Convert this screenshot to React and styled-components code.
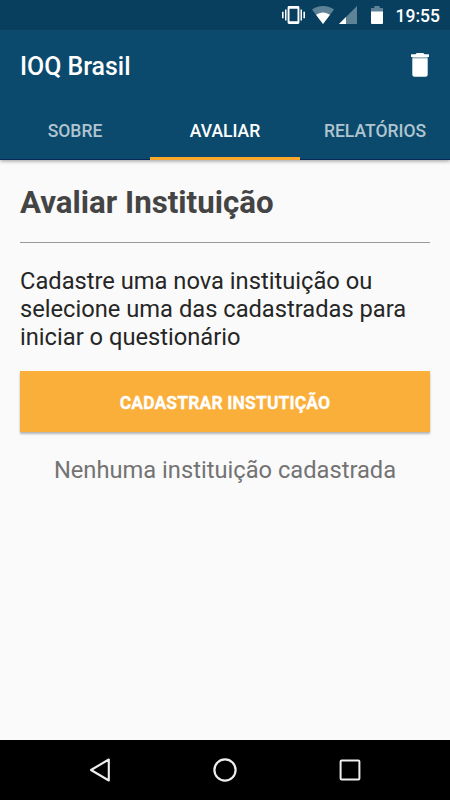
import React from "react";
import styled, { createGlobalStyle } from "styled-components";

const Global = createGlobalStyle`
  * { box-sizing: border-box; }
  body { margin: 0; font-family: Roboto, sans-serif; background: #fafafa; }
`;

const Screen = styled.div`
  width: 450px;
  height: 800px;
  display: flex;
  flex-direction: column;
  overflow: hidden;
  background: #fafafa;
`;

const StatusBar = styled.div`
  flex: none;
  height: 30px;
  padding: 0 10px 0 282px;
  display: flex;
  align-items: center;
  background: #093f5e;
  color: #fff;
`;

const Glyph = styled.svg`
  flex: none;
  display: block;
  margin-right: ${(p) => p.$gap || 0}px;
`;

const Clock = styled.span`
  margin: 2px 0 0 auto;
  font-size: 17.5px;
  line-height: 28px;
  font-weight: 500;
  white-space: nowrap;
`;

const Header = styled.header`
  flex: none;
  height: 130px;
  background: #0b4a6d;
  border-bottom: 1px solid #06285a;
  box-shadow: 0 1px 4px rgba(0, 0, 0, 0.4);
  clip-path: inset(0 0 -8px 0);
`;

const Toolbar = styled.div`
  height: 70px;
  padding: 0 21px 0 20px;
  display: flex;
  align-items: center;
  justify-content: space-between;
`;

const AppTitle = styled.h1`
  margin: 3px 0 0;
  font-size: 24.9px;
  line-height: 30px;
  font-weight: 500;
  color: #fff;
`;

const IconButton = styled.button`
  display: flex;
  padding: 0;
  border: 0;
  background: none;
`;

const Tabs = styled.nav`
  height: 60px;
  display: grid;
  grid-template-columns: repeat(3, 150px);
`;

const Tab = styled.button`
  padding: 5px 0 0;
  border: 0;
  border-bottom: 3px solid ${(p) => (p.$active ? "#fba92c" : "transparent")};
  background: none;
  font: 500 17.5px/20px Roboto, sans-serif;
  color: ${(p) => (p.$active ? "#fff" : "#b1c5d0")};
`;

const Content = styled.main`
  flex: 1;
  padding: 0 20px;
`;

const Heading = styled.h2`
  margin: 23px 0 0;
  font-size: 31.25px;
  line-height: 40px;
  font-weight: 700;
  color: #444;
  white-space: nowrap;
`;

const Divider = styled.hr`
  margin: 19px 0 0;
  height: 1px;
  border: 0;
  background: #999;
`;

const Description = styled.p`
  margin: 24px 0 0;
  font-size: 23.7px;
  line-height: 28px;
  color: #262626;
  white-space: nowrap;
`;

const PrimaryButton = styled.button`
  display: block;
  width: 100%;
  height: 61px;
  margin: 20px 0 0;
  padding: 2px 0 0;
  border: 0;
  background: #fbaf3b;
  box-shadow: 0 2px 2px rgba(0, 0, 0, 0.28);
  color: #fff;
  font: 700 17.5px/20px Roboto, sans-serif;
  letter-spacing: 0.13px;
  -webkit-text-stroke: 0.3px #fff;
`;

const EmptyMessage = styled.p`
  margin: 23px 0 0;
  text-align: center;
  font-size: 23.7px;
  line-height: 30px;
  color: #737373;
`;

const NavBar = styled.footer`
  flex: none;
  height: 60px;
  padding: 0 88px;
  display: flex;
  align-items: center;
  justify-content: space-between;
  background: #000;
`;

const VibrateIcon = () => (
  <Glyph width="24" height="18" viewBox="0 0 24 18" fill="#fff" $gap={6}>
    <path fillRule="evenodd" d="M7 0h9a1.4 1.4 0 0 1 1.4 1.4v15.2A1.4 1.4 0 0 1 16 18H7a1.4 1.4 0 0 1-1.4-1.4V1.4A1.4 1.4 0 0 1 7 0zM7.5 2.8v12.4h8V2.8z" />
    <path d="M3 3.4h1.5v11.2H3zM0 5.8h1.6v6.4H0zM18.5 3.4H20v11.2h-1.5zM21.4 5.8H23v6.4h-1.6z" />
  </Glyph>
);

const WifiIcon = () => (
  <Glyph width="22" height="18" viewBox="0 0 22 18" fill="#fff" $gap={5}>
    <path fillOpacity=".35" d="M11 18 0 3.5C3 1.2 6.8 0 11 0s8 1.2 11 3.5z" />
    <path d="M11 18 4 8.8c2-1.5 4.3-2.4 7-2.4s5 .9 7 2.4z" />
  </Glyph>
);

const SignalIcon = () => (
  <Glyph width="18" height="18" viewBox="0 0 18 18" fill="#fff" $gap={14}>
    <path fillOpacity=".35" d="M18 0v18H0z" />
    <path d="M7 11v7H0z" />
  </Glyph>
);

const BatteryIcon = () => (
  <Glyph width="12" height="18" viewBox="0 0 12 18" fill="#fff">
    <path fillOpacity=".35" d="M3.3 0h5.4v2H12v4H0V2h3.3z" />
    <path d="M0 5.5h12V17q0 1-1 1H1q-1 0-1-1z" />
  </Glyph>
);

const TrashIcon = () => (
  <Glyph width="18" height="24" viewBox="0 0 18 24" fill="#fff">
    <path d="M5.8 0h6.4l1.3 1.3H18V4H0V1.3h4.5zM1.3 5.2h15.4v16.1q0 2.5-2.5 2.5H3.8q-2.5 0-2.5-2.5z" />
    <path fillOpacity=".6" d="M1.3 4h15.4v1.2H1.3z" />
  </Glyph>
);

const BackIcon = () => (
  <Glyph width="24" height="24" viewBox="0 0 24 24" fill="none" stroke="#eee" strokeWidth="2.1" strokeLinejoin="round">
    <path d="M20.8 1.5v21L3 12z" />
  </Glyph>
);

const HomeIcon = () => (
  <Glyph width="24" height="24" viewBox="0 0 24 24" fill="none" stroke="#eee" strokeWidth="2.2">
    <circle cx="12" cy="12" r="10.6" />
  </Glyph>
);

const RecentIcon = () => (
  <Glyph width="24" height="24" viewBox="0 0 24 24" fill="none" stroke="#eee" strokeWidth="2">
    <rect x="2.6" y="2.6" width="18.8" height="18.8" rx="1" />
  </Glyph>
);

const tabs = ["SOBRE", "AVALIAR", "RELATÓRIOS"];

export default function App() {
  return (
    <Screen>
      <Global />
      <StatusBar>
        <VibrateIcon />
        <WifiIcon />
        <SignalIcon />
        <BatteryIcon />
        <Clock>19:55</Clock>
      </StatusBar>
      <Header>
        <Toolbar>
          <AppTitle>IOQ Brasil</AppTitle>
          <IconButton aria-label="Excluir">
            <TrashIcon />
          </IconButton>
        </Toolbar>
        <Tabs>
          {tabs.map((name) => (
            <Tab key={name} $active={name === "AVALIAR"}>
              {name}
            </Tab>
          ))}
        </Tabs>
      </Header>
      <Content>
        <Heading>Avaliar Instituição</Heading>
        <Divider />
        <Description>
          Cadastre uma nova instituição ou
          <br />
          selecione uma das cadastradas para
          <br />
          iniciar o questionário
        </Description>
        <PrimaryButton>CADASTRAR INSTUTIÇÃO</PrimaryButton>
        <EmptyMessage>Nenhuma instituição cadastrada</EmptyMessage>
      </Content>
      <NavBar>
        <BackIcon />
        <HomeIcon />
        <RecentIcon />
      </NavBar>
    </Screen>
  );
}
